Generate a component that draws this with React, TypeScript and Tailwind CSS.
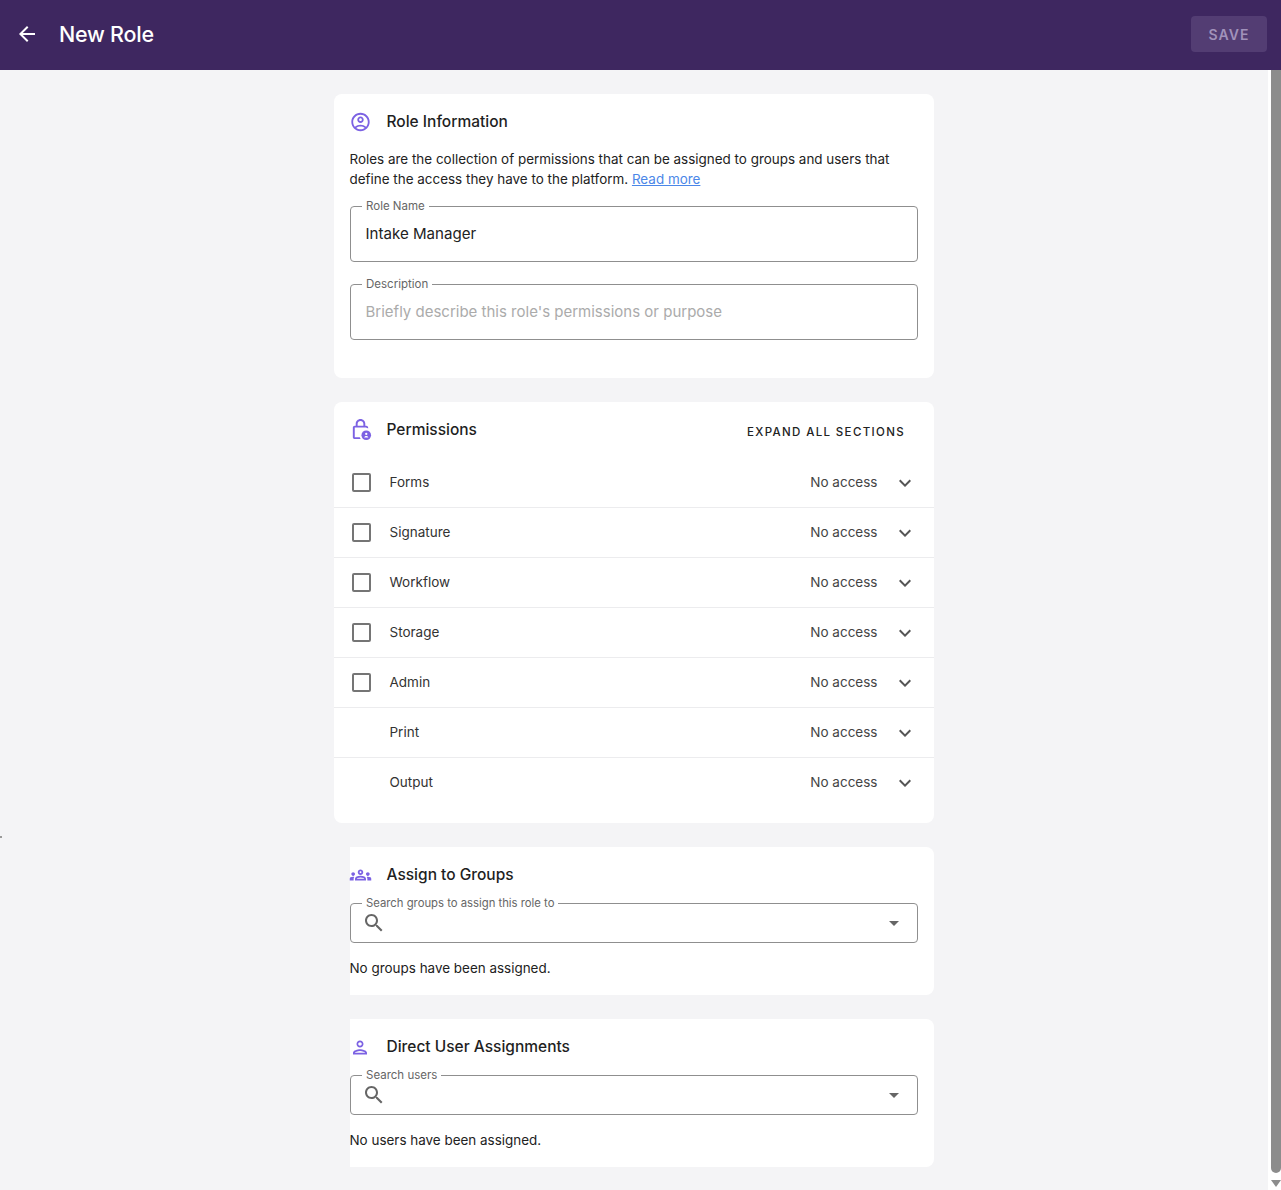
import React from "react";

const P = {
  back: "M20 11H7.83l5.59-5.59L12 4l-8 8 8 8 1.41-1.41L7.83 13H20v-2z",
  role: "M12 2C6.48 2 2 6.48 2 12s4.48 10 10 10 10-4.48 10-10S17.52 2 12 2zM7.35 18.5C8.66 17.56 10.26 17 12 17s3.34.56 4.65 1.5c-1.31.94-2.91 1.5-4.65 1.5s-3.34-.56-4.65-1.5zm10.79-1.38C16.45 15.8 14.32 15 12 15s-4.45.8-6.14 2.12C4.7 15.73 4 13.95 4 12c0-4.42 3.58-8 8-8s8 3.58 8 8c0 1.95-.7 3.73-1.86 5.12zM12 6c-1.93 0-3.5 1.57-3.5 3.5S10.07 13 12 13s3.5-1.57 3.5-3.5S13.93 6 12 6zm0 5c-.83 0-1.5-.67-1.5-1.5S11.17 8 12 8s1.5.67 1.5 1.5S12.83 11 12 11z",
  lock: "M18 8h-1V6c0-2.76-2.24-5-5-5S7 3.24 7 6v2H6c-1.1 0-2 .9-2 2v10c0 1.1.9 2 2 2h6.26c-.42-.6-.75-1.28-.97-2H6V10h12v.29c.71.1 1.38.31 2 .61V10c0-1.1-.9-2-2-2zM15 8H9V6c0-1.66 1.34-3 3-3s3 1.34 3 3v2z",
  groups: "M4 13c1.1 0 2-.9 2-2s-.9-2-2-2-2 .9-2 2 .9 2 2 2zm1.13 1.1C4.76 14.04 4.39 14 4 14c-.99 0-1.93.21-2.78.58C.48 14.9 0 15.62 0 16.43V18h4.5v-1.61c0-.83.23-1.61.63-2.29zM20 13c1.1 0 2-.9 2-2s-.9-2-2-2-2 .9-2 2 .9 2 2 2zm4 3.43c0-.81-.48-1.53-1.22-1.85C21.93 14.21 20.99 14 20 14c-.39 0-.76.04-1.13.1.4.68.63 1.46.63 2.29V18H24v-1.57zM16.24 13.65c-1.17-.52-2.61-.9-4.24-.9s-3.07.39-4.24.9C6.68 14.13 6 15.21 6 16.39V18h12v-1.61c0-1.18-.68-2.26-1.76-2.74zM8.07 16c.09-.23.13-.39.91-.69.97-.38 1.99-.56 3.02-.56s2.05.18 3.02.56c.77.3.81.46.91.69H8.07zM12 8c.55 0 1 .45 1 1s-.45 1-1 1-1-.45-1-1 .45-1 1-1m0-2c-1.66 0-3 1.34-3 3s1.34 3 3 3 3-1.34 3-3-1.34-3-3-3z",
  person: "M12 6c1.1 0 2 .9 2 2s-.9 2-2 2-2-.9-2-2 .9-2 2-2m0 10c2.7 0 5.8 1.29 6 2H6c.23-.72 3.31-2 6-2m0-12C9.79 4 8 5.79 8 8s1.79 4 4 4 4-1.79 4-4-1.79-4-4-4zm0 10c-2.67 0-8 1.34-8 4v2h16v-2c0-2.66-5.33-4-8-4z",
  search: "M15.5 14h-.79l-.28-.27C15.41 12.59 16 11.11 16 9.5 16 5.91 13.09 3 9.5 3S3 5.91 3 9.5 5.91 16 9.5 16c1.61 0 3.09-.59 4.23-1.57l.27.28v.79l5 4.99L20.49 19l-4.99-5zm-6 0C7.01 14 5 11.99 5 9.5S7.01 5 9.5 5 14 7.01 14 9.5 11.99 14 9.5 14z",
  drop: "M7 10l5 5 5-5z",
  chevron: "M16.59 8.59 12 13.17 7.41 8.59 6 10l6 6 6-6z",
};

function Icon({ d, className, children }: { d: string; className?: string; children?: React.ReactNode }) {
  return (
    <svg viewBox="0 0 24 24" fill="currentColor" className={className}>
      <path d={d} />
      {children}
    </svg>
  );
}

function CardTitle({ icon, title }: { icon: React.ReactNode; title: string }) {
  return (
    <div className="flex items-center">
      <div className="flex w-[36.5px] shrink-0 items-center justify-start text-[#7c62e3]">{icon}</div>
      <h2 className="text-[15.5px] leading-6 font-[450] text-[#1f1f1f]">{title}</h2>
    </div>
  );
}

function TextField({ label, value, placeholder }: { label: string; value?: string; placeholder?: string }) {
  return (
    <div className="relative flex h-14 items-center rounded border border-[#8f8f8f] px-[14.5px]">
      <span className="absolute -top-[8px] left-[11px] bg-white px-[4px] text-[11.5px] leading-[14px] text-[#666666]">{label}</span>
      {value ? (
        <span className="text-[15.1px] text-[#222222]">{value}</span>
      ) : (
        <span className="text-[15px] text-[#ababab]">{placeholder}</span>
      )}
    </div>
  );
}

function SearchField({ label, labelClass }: { label: string; labelClass: string }) {
  return (
    <div className="relative flex h-10 items-center justify-between rounded border border-[#8f8f8f] pr-[18px] pl-[11px]">
      <span className={`absolute -top-[8px] left-[11px] bg-white px-[4px] leading-[14px] text-[#666666] ${labelClass}`}>{label}</span>
      <Icon d={P.search} className="h-6 w-6 text-[#666666]" />
      <Icon d={P.drop} className="-mr-[7px] h-6 w-6 text-[#666666]" />
    </div>
  );
}

function PermissionRow({ name, check, last }: { name: string; check: boolean; last?: boolean }) {
  return (
    <div className={`flex h-[50px] items-center border-b pr-[17px] pl-[18px] ${last ? "border-transparent" : "border-[#ececee]"}`}>
      <div className="w-[37.5px] shrink-0">
        {check && <div className="h-[19px] w-[19px] rounded-[2px] border-2 border-[#757575]" />}
      </div>
      <span className="flex-1 text-[13.5px] text-[#333333]">{name}</span>
      <span className="mr-[15.5px] text-[13.5px] text-[#444444]">No access</span>
      <Icon d={P.chevron} className="h-6 w-6 text-[#555555]" />
    </div>
  );
}

export default function App() {
  return (
    <div
      className="flex h-[1190px] flex-col overflow-hidden bg-[#f4f4f6]"
      style={{ fontFamily: "Inter, 'Liberation Sans', sans-serif" }}
    >
      <header className="flex h-[70px] shrink-0 items-center justify-between bg-[#3e2760] pr-[14px] pb-[2px] pl-[15px]">
        <div className="flex items-center">
          <Icon d={P.back} className="h-6 w-6 text-white" />
          <h1 className="ml-[20px] text-[21.5px] font-medium tracking-[-0.25px] text-white">New Role</h1>
        </div>
        <button className="flex h-9 w-[76px] items-center justify-center rounded bg-[#533d73] text-[14px] font-semibold tracking-[1px] text-[#a192ba]">
          SAVE
        </button>
      </header>

      <div className="relative flex min-h-0 flex-1">
        <main className="flex min-w-0 flex-1 flex-col items-center gap-6 pt-6">
          <section className="h-[284px] w-[600px] rounded-lg bg-white px-4 pt-4">
            <CardTitle icon={<Icon d={P.role} className="h-[22px] w-[22px] -translate-x-[0.5px]" />} title="Role Information" />
            <p className="mt-[15px] -ml-[0.5px] text-[13.45px] leading-5 text-[#222222]">
              Roles are the collection of permissions that can be assigned to groups and users that define the access they have to the platform.{" "}
              <a className="text-[#4b87e8] underline">Read more</a>
            </p>
            <div className="mt-[17px] flex flex-col gap-[22px]">
              <TextField label="Role Name" value="Intake Manager" />
              <TextField label="Description" placeholder="Briefly describe this role's permissions or purpose" />
            </div>
          </section>

          <section className="h-[421px] w-[600px] rounded-lg bg-white">
            <div className="flex h-[56px] items-center justify-between pr-[29px] pl-4">
              <CardTitle icon={<Icon d={P.lock} className="h-[23px] w-[23px] -translate-x-[1px] -translate-y-[1px]"><circle cx="18" cy="18" r="5" /><circle cx="18" cy="16.6" r="1.2" fill="#fff" /><path d="M15.8 20.3c.5-1 1.3-1.4 2.2-1.4s1.7.4 2.2 1.4z" fill="#fff" /></Icon>} title="Permissions" />
              <span className="pt-[5px] text-[11.5px] font-medium tracking-[1.35px] text-[#222222]">EXPAND ALL SECTIONS</span>
            </div>
            <PermissionRow name="Forms" check />
            <PermissionRow name="Signature" check />
            <PermissionRow name="Workflow" check />
            <PermissionRow name="Storage" check />
            <PermissionRow name="Admin" check />
            <PermissionRow name="Print" check={false} />
            <PermissionRow name="Output" check={false} last />
          </section>

          <section className="ml-4 h-[148px] w-[584px] rounded-r-lg bg-white pt-4 pr-4">
            <CardTitle icon={<Icon d={P.groups} className="h-[22px] w-[22px] -translate-x-[0.5px]" />} title="Assign to Groups" />
            <div className="mt-[16px]"><SearchField label="Search groups to assign this role to" labelClass="text-[11.3px]" /></div>
            <p className="mt-[15px] -ml-[0.5px] text-[13.45px] leading-5 text-[#222222]">No groups have been assigned.</p>
          </section>

          <section className="ml-4 h-[148px] w-[584px] rounded-r-lg bg-white pt-4 pr-4">
            <CardTitle icon={<Icon d={P.person} className="h-[21px] w-[21px] -translate-x-[0.5px]" />} title="Direct User Assignments" />
            <div className="mt-[16px]"><SearchField label="Search users" labelClass="text-[11.5px]" /></div>
            <p className="mt-[15px] -ml-[0.5px] text-[13.45px] leading-5 text-[#222222]">No users have been assigned.</p>
          </section>
        </main>

        <aside className="flex w-[13px] shrink-0 flex-col items-end bg-white">
          <div className="h-[1103px] w-[10px] rounded-b-[5px] bg-[#8c8c8c]" />
          <div className="mt-[7px] h-0 w-0 border-x-[5px] border-t-[7px] border-x-transparent border-t-[#8c8c8c]" />
        </aside>

        <div className="absolute top-[766px] left-0 h-[2px] w-[2px] bg-[#9a9a9a]" />
      </div>
    </div>
  );
}
